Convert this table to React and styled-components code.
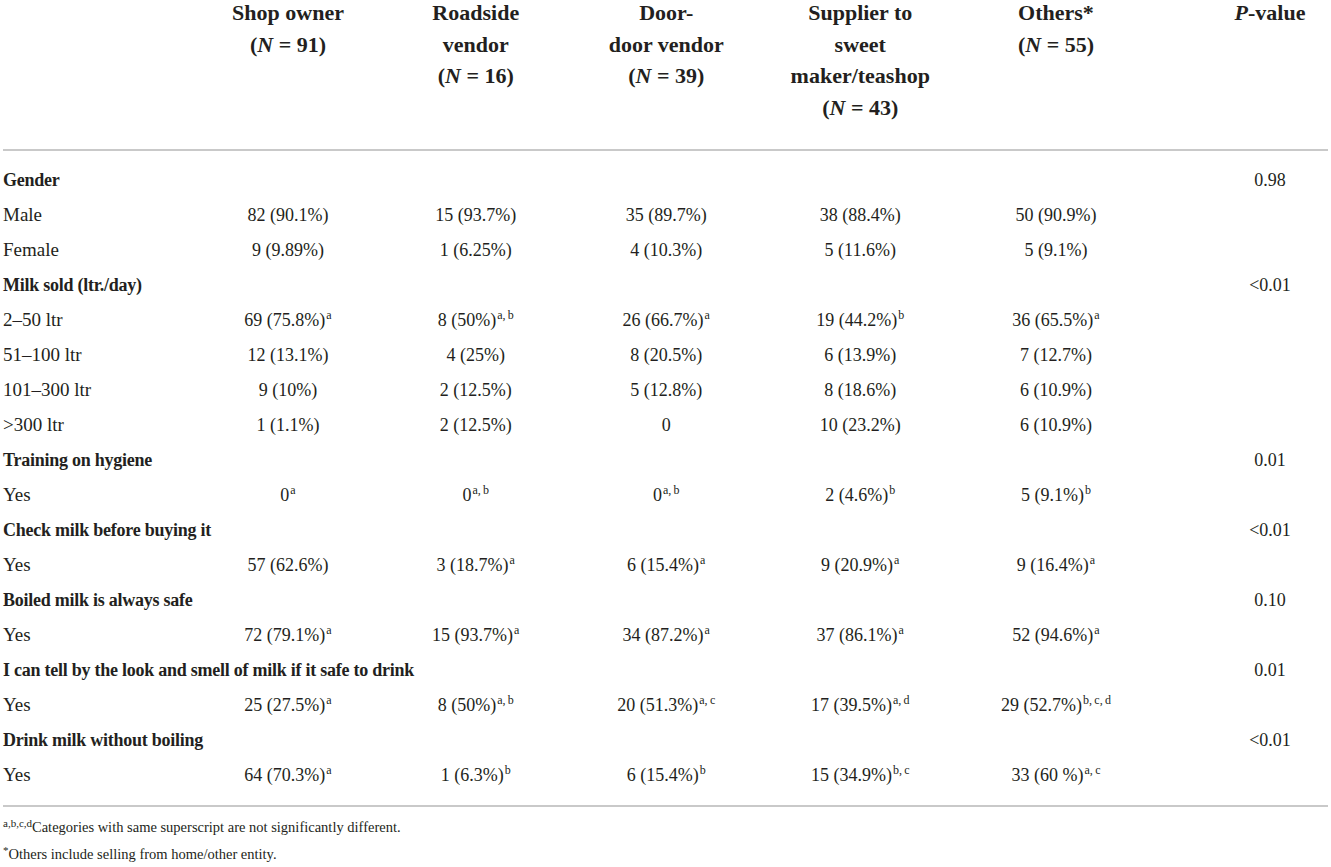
import React from "react";
import styled, { createGlobalStyle } from "styled-components";

const Global = createGlobalStyle`
  html, body { margin: 0; padding: 0; background: #fff; }
  body { font-family: "Liberation Serif", "Times New Roman", serif; color: #231f20; }
`;

const COLS = "191.5px 187px 188.5px 192.5px 195.5px 196px 174px";

const Page = styled.div`
  margin: 0 3px;
  width: 1325px;
`;

const HeadRow = styled.div`
  display: grid;
  grid-template-columns: ${COLS};
  margin-top: -3px;
  padding-bottom: 26px;
  border-bottom: 2px solid #c9c9c9;
`;

const HeadCell = styled.div`
  font-size: 22px;
  font-weight: bold;
  line-height: 31.5px;
  text-align: center;
  padding-left: ${(p) => (p.$pcol ? "58px" : "0")};
`;

const Body = styled.div`
  padding: 11.5px 0 12.5px;
  border-bottom: 2px solid #c9c9c9;
`;

const Row = styled.div`
  display: grid;
  grid-template-columns: ${COLS};
  height: 35px;
  align-items: center;
  white-space: nowrap;
`;

const Label = styled.div`
  font-size: ${(p) => (p.$bold ? "18px" : "19px")};
  letter-spacing: ${(p) => (p.$bold ? "-0.25px" : "0")};
  font-weight: ${(p) => (p.$bold ? "bold" : "normal")};
  grid-column: ${(p) => (p.$span ? "1 / 7" : "auto")};
`;

const Value = styled.div`
  font-size: 18px;
  text-align: center;
  padding-left: ${(p) => (p.$pcol ? "58px" : "0")};
`;

const Sup = styled.sup`
  font-size: 12px;
  line-height: 0;
  vertical-align: 0.55em;
  margin-left: 1px;
`;

const Notes = styled.div`
  padding-top: 7px;
`;

const Note = styled.div`
  font-size: 14.5px;
  line-height: 27px;
`;

const NoteSup = styled.sup`
  font-size: 11px;
  line-height: 0;
  vertical-align: 0.45em;
`;

const sections = [
  {
    title: "Gender",
    p: "0.98",
    rows: [
      ["Male", "82 (90.1%)", "15 (93.7%)", "35 (89.7%)", "38 (88.4%)", "50 (90.9%)"],
      ["Female", "9 (9.89%)", "1 (6.25%)", "4 (10.3%)", "5 (11.6%)", "5 (9.1%)"],
    ],
  },
  {
    title: "Milk sold (ltr./day)",
    p: "<0.01",
    rows: [
      ["2–50 ltr", ["69 (75.8%)", "a"], ["8 (50%)", "a, b"], ["26 (66.7%)", "a"], ["19 (44.2%)", "b"], ["36 (65.5%)", "a"]],
      ["51–100 ltr", "12 (13.1%)", "4 (25%)", "8 (20.5%)", "6 (13.9%)", "7 (12.7%)"],
      ["101–300 ltr", "9 (10%)", "2 (12.5%)", "5 (12.8%)", "8 (18.6%)", "6 (10.9%)"],
      [">300 ltr", "1 (1.1%)", "2 (12.5%)", "0", "10 (23.2%)", "6 (10.9%)"],
    ],
  },
  {
    title: "Training on hygiene",
    p: "0.01",
    rows: [["Yes", ["0", "a"], ["0", "a, b"], ["0", "a, b"], ["2 (4.6%)", "b"], ["5 (9.1%)", "b"]]],
  },
  {
    title: "Check milk before buying it",
    p: "<0.01",
    rows: [["Yes", "57 (62.6%)", ["3 (18.7%)", "a"], ["6 (15.4%)", "a"], ["9 (20.9%)", "a"], ["9 (16.4%)", "a"]]],
  },
  {
    title: "Boiled milk is always safe",
    p: "0.10",
    rows: [["Yes", ["72 (79.1%)", "a"], ["15 (93.7%)", "a"], ["34 (87.2%)", "a"], ["37 (86.1%)", "a"], ["52 (94.6%)", "a"]]],
  },
  {
    title: "I can tell by the look and smell of milk if it safe to drink",
    p: "0.01",
    rows: [["Yes", ["25 (27.5%)", "a"], ["8 (50%)", "a, b"], ["20 (51.3%)", "a, c"], ["17 (39.5%)", "a, d"], ["29 (52.7%)", "b, c, d"]]],
  },
  {
    title: "Drink milk without boiling",
    p: "<0.01",
    rows: [["Yes", ["64 (70.3%)", "a"], ["1 (6.3%)", "b"], ["6 (15.4%)", "b"], ["15 (34.9%)", "b, c"], ["33 (60 %)", "a, c"]]],
  },
];

function Cell({ v }) {
  if (Array.isArray(v)) {
    return (
      <Value>
        {v[0]}
        <Sup>{v[1].replace(/ /g, "\u2009")}</Sup>
      </Value>
    );
  }
  return <Value>{v}</Value>;
}

const N = ({ n }) => (
  <>
    (<i>N</i> = {n})
  </>
);

export default function App() {
  return (
    <>
      <Global />
      <Page>
        <HeadRow>
          <HeadCell />
          <HeadCell>
            Shop owner
            <br />
            <N n={91} />
          </HeadCell>
          <HeadCell>
            Roadside
            <br />
            vendor
            <br />
            <N n={16} />
          </HeadCell>
          <HeadCell>
            Door-
            <br />
            door vendor
            <br />
            <N n={39} />
          </HeadCell>
          <HeadCell>
            Supplier to
            <br />
            sweet
            <br />
            maker/teashop
            <br />
            <N n={43} />
          </HeadCell>
          <HeadCell>
            Others*
            <br />
            <N n={55} />
          </HeadCell>
          <HeadCell $pcol>
            <i>P</i>-value
          </HeadCell>
        </HeadRow>
        <Body>
          {sections.map((s) => (
            <React.Fragment key={s.title}>
              <Row>
                <Label $bold $span>
                  {s.title}
                </Label>
                <Value $pcol>{s.p}</Value>
              </Row>
              {s.rows.map((r, i) => (
                <Row key={i}>
                  <Label>{r[0]}</Label>
                  {r.slice(1).map((v, j) => (
                    <Cell key={j} v={v} />
                  ))}
                  <Value $pcol />
                </Row>
              ))}
            </React.Fragment>
          ))}
        </Body>
        <Notes>
          <Note>
            <NoteSup>a,b,c,d</NoteSup>Categories with same superscript are not significantly different.
          </Note>
          <Note>
            <NoteSup>*</NoteSup>Others include selling from home/other entity.
          </Note>
        </Notes>
      </Page>
    </>
  );
}
